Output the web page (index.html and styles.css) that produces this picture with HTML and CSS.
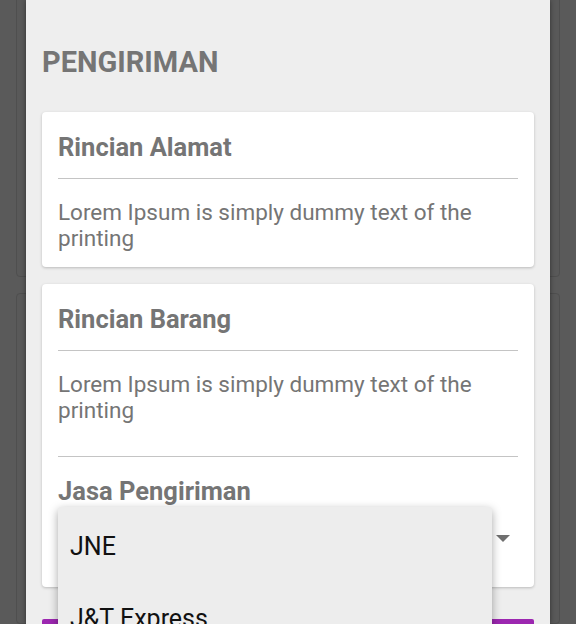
FILE: index.html
```html
<!DOCTYPE html>
<html lang="id">
<head>
<meta charset="utf-8">
<title>Pengiriman</title>
<link rel="stylesheet" href="styles.css">
</head>
<body>
<div class="screen">
  <div class="backdrop">
    <div class="bg-card bg-card-top"></div>
    <div class="bg-card"></div>
  </div>

  <div class="dialog">
    <h1 class="title">PENGIRIMAN</h1>

    <section class="card">
      <h2 class="card-title">Rincian Alamat</h2>
      <div class="divider"></div>
      <p class="card-text">Lorem Ipsum is simply dummy text of the printing</p>
    </section>

    <section class="card card-second">
      <h2 class="card-title">Rincian Barang</h2>
      <div class="divider"></div>
      <p class="card-text">Lorem Ipsum is simply dummy text of the printing</p>
      <div class="divider divider-gap"></div>
      <h2 class="card-title card-title-tight">Jasa Pengiriman</h2>
      <div class="spinner">
        <span class="spinner-arrow"></span>
      </div>
    </section>

    <div class="submit"></div>
  </div>

  <ul class="dropdown">
    <li class="dropdown-item">JNE</li>
    <li class="dropdown-item">J&amp;T Express</li>
  </ul>
</div>
</body>
</html>
```

FILE: styles.css
```css
* { box-sizing: border-box; }

html, body {
  margin: 0;
  padding: 0;
  background: #5a5a5a;
  font-family: Roboto, "Noto Sans", "Liberation Sans", sans-serif;
}

.screen {
  position: relative;
  width: 576px;
  height: 624px;
  overflow: hidden;
  background: #5a5a5a;
}

/* dimmed activity behind the dialog */
.backdrop {
  position: absolute;
  inset: 0;
  padding: 0 16px;
  display: flex;
  flex-direction: column;
  gap: 16px;
}

.bg-card {
  height: 340px;
  background: #595959;
  border: 1px solid #4f4f4f;
  border-radius: 4px;
}

.bg-card-top {
  height: 294px;
  margin-top: -10px;
}

.dialog {
  position: relative;
  margin-left: 26px;
  width: 524px;
  height: 624px;
  padding: 0 16px;
  background: #eeeeee;
  box-shadow: 0 0 5px rgba(0, 0, 0, 0.45);
}

.title {
  margin: 0;
  padding-top: 45px;
  font-size: 29px;
  line-height: 34px;
  font-weight: 700;
  color: #757575;
}

.card {
  margin-top: 33px;
  background: #ffffff;
  border-radius: 4px;
  padding: 20px 16px 16px;
  box-shadow: 0 1px 3px rgba(0, 0, 0, 0.22);
}

.card-second {
  margin-top: 17px;
  padding-bottom: 17px;
}

.card-title {
  margin: 0;
  font-size: 25.5px;
  line-height: 30px;
  font-weight: 700;
  color: #757575;
}

.divider {
  margin-top: 16px;
  height: 1px;
  background: #c4c4c4;
}

.divider-gap {
  margin-top: 33px;
}

.card-text {
  margin: 20px 0 0;
  font-size: 22.5px;
  line-height: 26px;
  color: #757575;
}

.card-title-tight {
  margin-top: 19px;
}

.spinner {
  height: 64px;
  display: flex;
  align-items: center;
  justify-content: flex-end;
  padding-right: 8px;
}

.spinner-arrow {
  width: 0;
  height: 0;
  border-left: 7px solid transparent;
  border-right: 7px solid transparent;
  border-top: 7px solid #6f6f6f;
}

.submit {
  margin-top: 32px;
  height: 48px;
  background: #9c27b0;
  border-radius: 2px;
}

/* open spinner popup */
.dropdown {
  position: absolute;
  left: 58px;
  top: 507px;
  width: 434px;
  height: 150px;
  margin: 0;
  padding: 4px 0 0;
  list-style: none;
  background: #ededed;
  border-radius: 3px;
  box-shadow: 0 3px 10px rgba(0, 0, 0, 0.35);
}

.dropdown-item {
  height: 72px;
  line-height: 72px;
  padding: 0 12px;
  font-size: 25px;
  color: #111111;
}
```
